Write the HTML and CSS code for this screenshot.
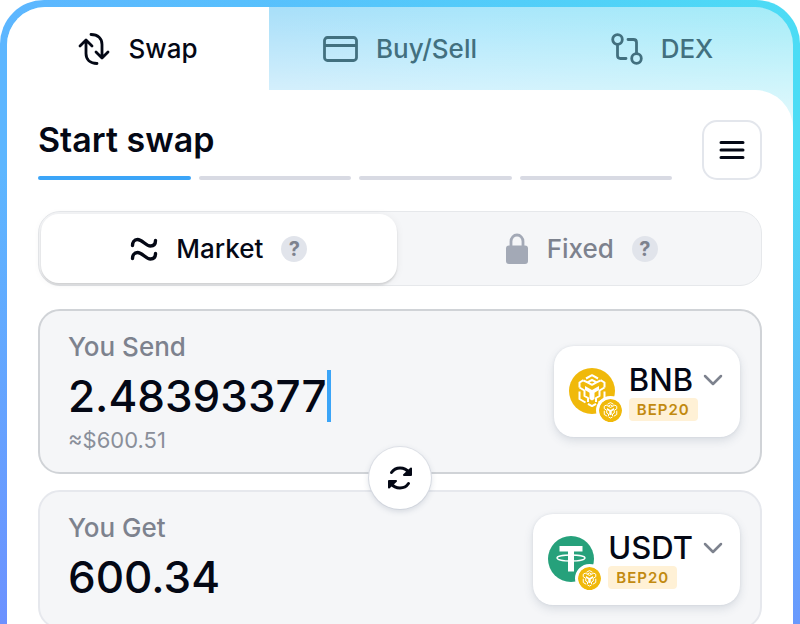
FILE: index.html
```html
<!DOCTYPE html>
<html lang="en">
<head>
    <meta charset="UTF-8">
    <meta name="viewport" content="width=device-width, initial-scale=1.0">
    <title>Swap</title>
    <link rel="stylesheet" href="styles.css">
</head>
<body>
    <!-- shared logo shape -->
    <svg class="sprite" aria-hidden="true">
        <symbol id="bnb" viewBox="0 0 46 46">
            <circle cx="23" cy="23" r="23" fill="#f0b90b"/>
            <g fill="none" stroke="#fff" stroke-width="2" stroke-linejoin="round">
                <path d="M17 10.500l6-3.300 6 3.300"/>
                <path d="M18.500 14.300l4.500-2.500 4.500 2.500-4.500 2.500z"/>
                <path d="M10.500 19.500v-5l4-2.300M35.500 19.500v-5l-4-2.300"/>
                <path d="M14.500 12.500l4 1.800M31.500 12.500l-4 1.800"/>
                <path d="M10.500 23.500v7.500l6 3.500M35.500 23.500v7.500l-6 3.500"/>
                <path d="M10.500 19.500l5 3v5.500l3.500 2v4M35.500 19.500l-5 3v5.500l-3.500 2v4"/>
                <path d="M19 35.800l4 2.300 4-2.300"/>
            </g>
            <path d="M16 18l7 4 7-4v4l-4.500 2.700v6.300l-2.500 1.500-2.500-1.500v-6.300l-4.500-2.700z" fill="#fff"/>
        </symbol>
    </svg>

    <div class="widget">
        <div class="widget-inner">
            <nav class="tabs">
                <button type="button" class="tab active">
                    <svg width="32" height="32" viewBox="0 0 32 32" fill="none" stroke="currentColor" stroke-width="2.800" stroke-linecap="round" stroke-linejoin="round">
                        <path d="M2 13l6-6 6 6M8 7.500v13c0 6 4 10 11 10"/>
                        <path d="M30 19l-6 6-6-6M24 24.500v-13c0-6-4-10-11-10"/>
                    </svg>
                    Swap
                </button>
                <button type="button" class="tab">
                    <svg width="35" height="26" viewBox="0 0 35 26" fill="none" stroke="currentColor" stroke-width="2.800">
                        <rect x="1.500" y="1.500" width="32" height="23" rx="3"/>
                        <path d="M2 9.500h31"/>
                    </svg>
                    Buy/Sell
                </button>
                <button type="button" class="tab">
                    <svg width="32" height="32" viewBox="0 0 32 32" fill="none" stroke="currentColor" stroke-width="2.800" stroke-linecap="round">
                        <circle cx="6.500" cy="6.500" r="4.800"/>
                        <circle cx="25.500" cy="25.500" r="4.800"/>
                        <path d="M6.500 11.500v11q0 3 3 3h5.500M25.500 20.500v-11q0-3-3-3h-5.500"/>
                    </svg>
                    DEX
                </button>
            </nav>

            <main class="panel">
                <header class="panel-header">
                    <div class="progress">
                        <h1>Start swap</h1>
                        <div class="steps">
                            <span class="step done"></span>
                            <span class="step"></span>
                            <span class="step"></span>
                            <span class="step"></span>
                        </div>
                    </div>
                    <button type="button" class="menu-btn" aria-label="Menu">
                        <svg width="26" height="20" viewBox="0 0 26 20" stroke="currentColor" stroke-width="3" stroke-linecap="round">
                            <path d="M2 2.500h22M2 10h22M2 17.500h22"/>
                        </svg>
                    </button>
                </header>

                <div class="rate">
                    <button type="button" class="rate-option active">
                        <svg width="28" height="24" viewBox="0 0 28 24" fill="none" stroke="currentColor" stroke-width="3.400" stroke-linecap="round">
                            <path d="M2.500 8.500c0-3 1.500-6 5-6 5 0 8 6.500 13 6.500 3 0 5-2 5-5.500"/>
                            <path d="M2.500 21.500c0-3 1.500-6 5-6 5 0 8 6.500 13 6.500 3 0 5-2 5-5.500"/>
                        </svg>
                        Market
                        <span class="help">?</span>
                    </button>
                    <button type="button" class="rate-option">
                        <svg width="24" height="32" viewBox="0 0 24 32" fill="none">
                            <path d="M6 14v-5.500a6 6.500 0 0 1 12 0v5.500" stroke="#a3a9b6" stroke-width="2.800"/>
                            <rect x="1" y="12.500" width="22" height="18.500" rx="3" fill="#a3a9b6"/>
                        </svg>
                        Fixed
                        <span class="help">?</span>
                    </button>
                </div>

                <section class="card focused">
                    <div class="amount">
                        <label for="send">You Send</label>
                        <div class="value">
                            <input type="text" id="send" inputmode="decimal" size="10" value="2.48393377">
                            <span class="caret"></span>
                        </div>
                        <span class="fiat">≈$600.51</span>
                    </div>
                    <button type="button" class="coin">
                        <span class="logo">
                            <svg class="logo-main"><use href="#bnb"/></svg>
                            <svg class="logo-chain"><use href="#bnb"/></svg>
                        </span>
                        <span class="coin-text">
                            <span class="symbol">
                                BNB
                                <svg width="20" height="12" viewBox="0 0 20 12" fill="none" stroke="#7d828e" stroke-width="2.500" stroke-linecap="round" stroke-linejoin="round">
                                    <path d="M2 2l8 8 8-8"/>
                                </svg>
                            </span>
                            <span class="network">BEP20</span>
                        </span>
                    </button>
                    <button type="button" class="flip" aria-label="Flip coins">
                        <svg width="28" height="26" viewBox="0 0 28 26" fill="none" stroke="currentColor" stroke-width="3">
                            <path d="M5.500 7.500c4-6 13-6 17.500 0M22.500 18.500c-4 6-13 6-17.500 0" stroke-linecap="round"/>
                            <path d="M25 3.500v6.500h-7zM3 22.500v-6.500h7z" fill="currentColor" stroke-width="2" stroke-linejoin="round"/>
                        </svg>
                    </button>
                </section>

                <section class="card">
                    <div class="amount">
                        <label for="get">You Get</label>
                        <div class="value">
                            <input type="text" id="get" size="6" value="600.34" readonly>
                        </div>
                    </div>
                    <button type="button" class="coin">
                        <span class="logo">
                            <svg class="logo-main" viewBox="0 0 46 46">
                                <circle cx="23" cy="23" r="23" fill="#26a17b"/>
                                <path d="M11.500 10h23v5.500h-8.500v20h-6v-20h-8.500z" fill="#fff"/>
                                <ellipse cx="23" cy="22" rx="14" ry="3" fill="none" stroke="#fff" stroke-width="1.300"/>
                            </svg>
                            <svg class="logo-chain"><use href="#bnb"/></svg>
                        </span>
                        <span class="coin-text">
                            <span class="symbol">
                                USDT
                                <svg width="20" height="12" viewBox="0 0 20 12" fill="none" stroke="#7d828e" stroke-width="2.500" stroke-linecap="round" stroke-linejoin="round">
                                    <path d="M2 2l8 8 8-8"/>
                                </svg>
                            </span>
                            <span class="network">BEP20</span>
                        </span>
                    </button>
                </section>
            </main>
        </div>
    </div>
</body>
</html>
```
FILE: styles.css
```css
* {
    box-sizing: border-box;
}
body {
    margin: 0;
    background: #fff;
    color: #040815;
    font-family: Inter, sans-serif;
    font-size: 26px;
    font-weight: 500;
    overflow: hidden;
}
button, input {
    font: inherit;
    color: inherit;
    border: 0;
    padding: 0;
    background: none;
}
button {
    cursor: pointer;
}
.sprite {
    position: absolute;
    width: 0;
    height: 0;
}

/* frame */
.widget {
    padding: 7px;
    border-radius: 44px;
    background:
        linear-gradient(to bottom, rgba(112, 136, 255, 0) 25%, rgba(112, 136, 255, 0.9) 100%),
        linear-gradient(to right, #5db6ff, #58bffd 30%, #4cdcf5);
}
.widget-inner {
    border-radius: 38px;
    overflow: hidden;
    background:
        linear-gradient(to bottom, rgba(255, 255, 255, 0), rgba(255, 255, 255, 0.5) 83px, rgba(255, 255, 255, 0.7) 120px),
        linear-gradient(to right, #a8dff9 34%, #a9e6fb 60%, #a5ecf8);
}

/* top tabs */
.tabs {
    display: grid;
    grid-template-columns: repeat(3, 1fr);
}
.tab {
    display: flex;
    align-items: center;
    justify-content: center;
    gap: 18px;
    height: 83px;
    color: #42707f;
}
.tab.active {
    background: #fff;
    color: #040815;
}

.panel {
    padding: 30px 31px;
    background: #fff;
    border-radius: 0 38px 0 0;
}
.panel-header {
    display: flex;
    gap: 30px;
    margin-bottom: 31px;
}
.progress {
    flex: 1;
    display: flex;
    flex-direction: column;
    justify-content: space-between;
}
h1 {
    margin: 0;
    font-size: 34px;
    line-height: 40px;
    font-weight: 600;
}
.steps {
    display: grid;
    grid-template-columns: repeat(4, 1fr);
    gap: 8px;
}
.step {
    height: 4px;
    border-radius: 2px;
    background: #d8dae3;
}
.step.done {
    background: #3ba5f8;
}
.menu-btn {
    display: flex;
    align-items: center;
    justify-content: center;
    width: 60px;
    height: 60px;
    border: 2px solid #e3e6ec;
    border-radius: 15px;
}

/* market / fixed */
.rate {
    display: grid;
    grid-template-columns: 1fr 1fr;
    gap: 7px;
    height: 75px;
    margin-bottom: 23px;
    padding: 2px;
    border: 1px solid #e6e8eb;
    border-radius: 22px;
    background: #f5f6f8;
}
.rate-option {
    display: flex;
    align-items: center;
    justify-content: center;
    gap: 18px;
    border-radius: 18px;
    color: #7d828e;
}
.rate-option.active {
    background: #fff;
    color: #040815;
    box-shadow: 0 2px 2px rgba(0, 0, 0, 0.12), 0 1px 8px rgba(0, 0, 0, 0.06);
}
.help {
    width: 26px;
    height: 26px;
    border-radius: 50%;
    background: #e1e4eb;
    color: #7d828e;
    font-size: 20px;
    line-height: 26px;
    font-weight: 700;
}

/* send / get */
.card {
    position: relative;
    display: flex;
    align-items: center;
    justify-content: space-between;
    margin-bottom: 16px;
    padding: 18px 20px 19px 28px;
    border: 2px solid #e6e8ed;
    border-radius: 22px;
    background: #f5f6f8;
}
.card.focused {
    border-color: #d0d3d7;
}
.amount {
    display: flex;
    flex-direction: column;
}
.amount label {
    line-height: 36px;
    color: #7d828e;
}
.value {
    display: flex;
    align-items: center;
    height: 62px;
}
.value input {
    field-sizing: content;
    font-size: 44px;
    outline: none;
}
.caret {
    width: 4px;
    height: 52px;
    background: #3ba5f8;
}
.fiat {
    font-size: 22px;
    line-height: 26px;
    font-weight: 400;
    color: #8a8f9a;
}

.coin {
    display: flex;
    align-items: center;
    height: 91px;
    padding: 0 17px 0 15px;
    border-radius: 20px;
    background: #fff;
    box-shadow: 0 4px 10px rgba(60, 80, 110, 0.15), 0 0 3px rgba(60, 80, 110, 0.1);
}
.logo {
    position: relative;
    width: 46px;
    height: 46px;
    margin-right: 14px;
}
.logo-main {
    display: block;
    width: 46px;
    height: 46px;
}
.logo-chain {
    position: absolute;
    right: -10px;
    bottom: -11px;
    width: 29px;
    height: 29px;
    border: 3px solid #fff;
    border-radius: 50%;
    background: #fff;
}
.coin-text {
    display: flex;
    flex-direction: column;
    align-items: flex-start;
}
.symbol {
    display: flex;
    align-items: center;
    gap: 10px;
    font-size: 31px;
    line-height: 36px;
}
.network {
    padding: 0 8px;
    border-radius: 4px;
    background: #fff1d6;
    color: #c28a10;
    font-size: 15px;
    line-height: 23px;
    font-weight: 600;
    letter-spacing: 1px;
}

.flip {
    position: absolute;
    left: 50%;
    top: 100%;
    z-index: 1;
    display: flex;
    align-items: center;
    justify-content: center;
    width: 62px;
    height: 62px;
    border-radius: 50%;
    background: #fff;
    transform: translate(-50%, -25px);
    box-shadow: 0 2px 6px rgba(60, 80, 110, 0.2), 0 0 0 1px #e6e8ed;
}
```
